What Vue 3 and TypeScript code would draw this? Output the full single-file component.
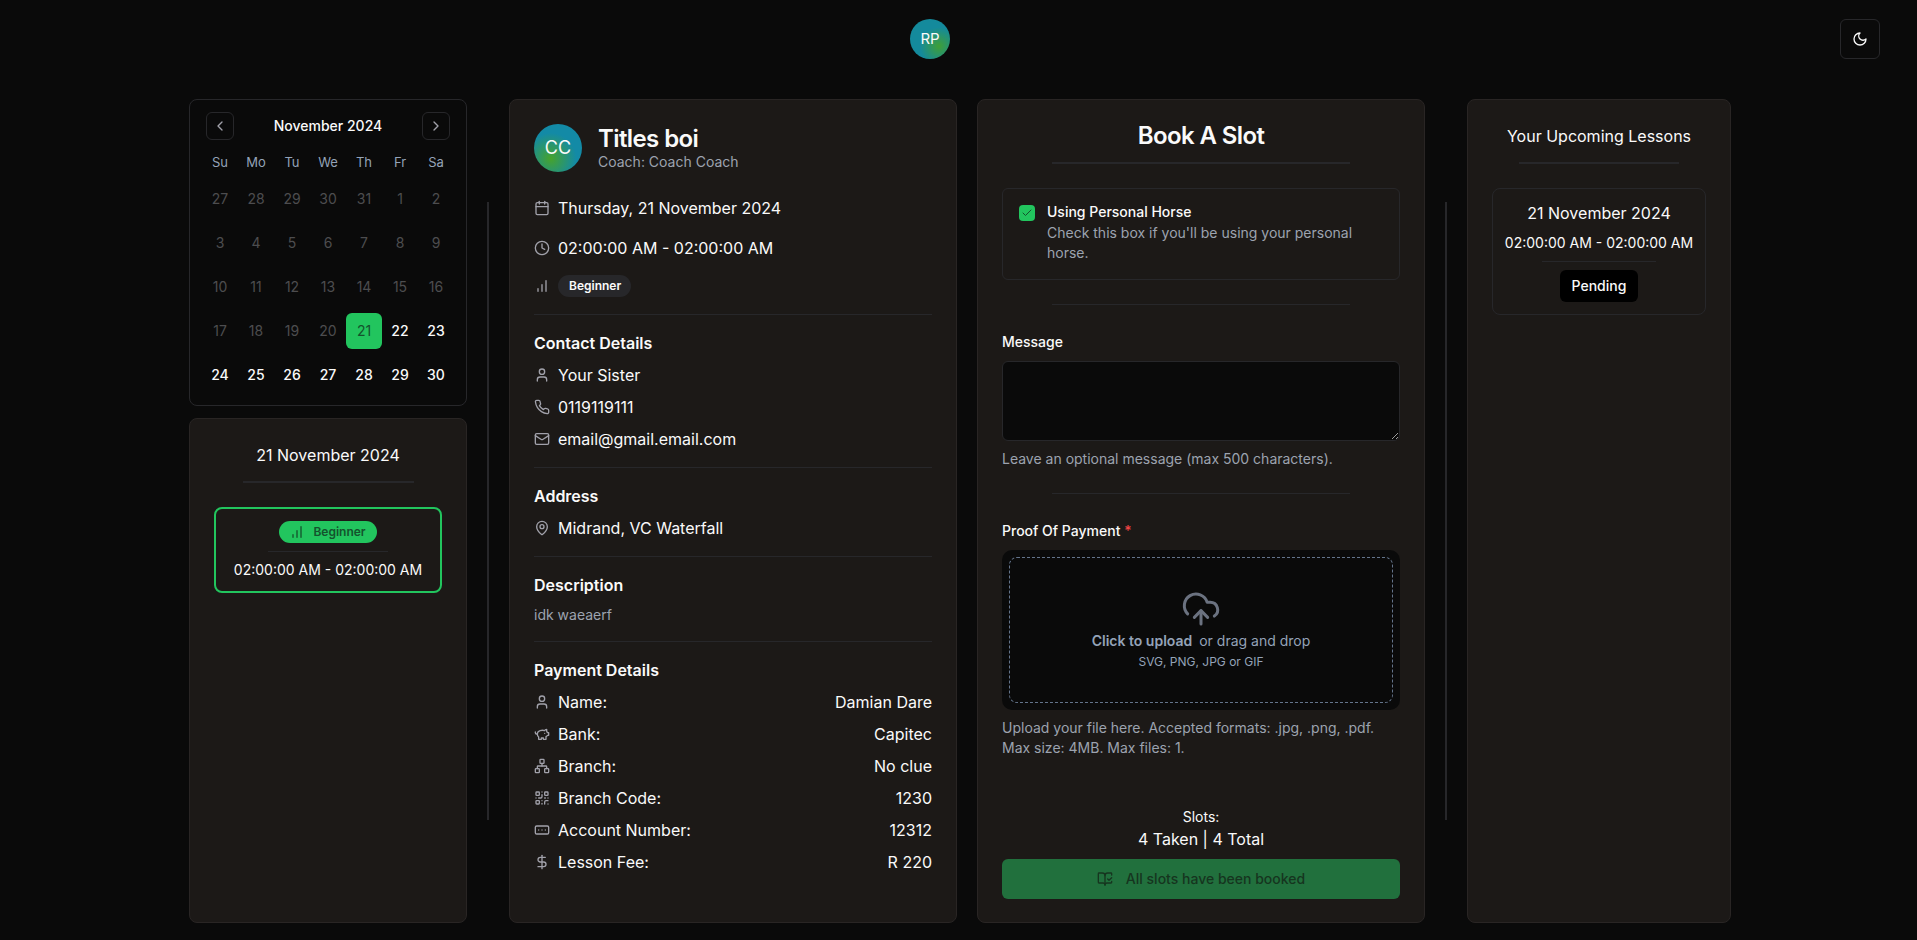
<script setup lang="ts">
interface InfoRow {
  icon: string
  label: string
  value?: string
}

const icons: Record<string, string> = {
  calendar: '<path d="M8 2v4"/><path d="M16 2v4"/><rect width="18" height="18" x="3" y="4" rx="2"/><path d="M3 10h18"/>',
  clock: '<circle cx="12" cy="12" r="10"/><polyline points="12 6 12 12 16 14"/>',
  level: '<path d="M12 20V10"/><path d="M18 20V4"/><path d="M6 20v-4"/>',
  user: '<path d="M19 21v-2a4 4 0 0 0-4-4H9a4 4 0 0 0-4 4v2"/><circle cx="12" cy="7" r="4"/>',
  phone: '<path d="M22 16.92v3a2 2 0 0 1-2.18 2 19.79 19.79 0 0 1-8.63-3.07 19.5 19.5 0 0 1-6-6 19.79 19.79 0 0 1-3.07-8.67A2 2 0 0 1 4.11 2h3a2 2 0 0 1 2 1.72 12.84 12.84 0 0 0 .7 2.81 2 2 0 0 1-.45 2.11L8.09 9.91a16 16 0 0 0 6 6l1.27-1.27a2 2 0 0 1 2.11-.45 12.84 12.84 0 0 0 2.81.7A2 2 0 0 1 22 16.92z"/>',
  mail: '<rect width="20" height="16" x="2" y="4" rx="2"/><path d="m22 7-8.97 5.7a1.94 1.94 0 0 1-2.06 0L2 7"/>',
  pin: '<path d="M20 10c0 4.993-5.539 10.193-7.399 11.799a1 1 0 0 1-1.202 0C9.539 20.193 4 14.993 4 10a8 8 0 0 1 16 0"/><circle cx="12" cy="10" r="3"/>',
  piggy: '<path d="M19 5c-1.5 0-2.8 1.4-3 2-3.5-1.5-11-.3-11 5 0 1.8 0 3 2 4.5V20h4v-2h3v2h4v-4c1-.5 1.7-1 2-2h2v-4h-2c0-1-.5-1.5-1-2V5z"/><path d="M2 9v1c0 1.1.9 2 2 2h1"/><path d="M16 11h.01"/>',
  network: '<rect x="16" y="16" width="6" height="6" rx="1"/><rect x="2" y="16" width="6" height="6" rx="1"/><rect x="9" y="2" width="6" height="6" rx="1"/><path d="M5 16v-3a1 1 0 0 1 1-1h12a1 1 0 0 1 1 1v3"/><path d="M12 12V8"/>',
  qr: '<rect width="5" height="5" x="3" y="3" rx="1"/><rect width="5" height="5" x="16" y="3" rx="1"/><rect width="5" height="5" x="3" y="16" rx="1"/><path d="M21 16h-3a2 2 0 0 0-2 2v3"/><path d="M21 21v.01"/><path d="M12 7v3a2 2 0 0 1-2 2H7"/><path d="M3 12h.01"/><path d="M12 3h.01"/><path d="M12 16v.01"/><path d="M16 12h1"/><path d="M21 12v.01"/><path d="M12 21v-1"/>',
  account: '<rect width="20" height="12" x="2" y="6" rx="2"/><path d="M12 12h.01"/><path d="M17 12h.01"/><path d="M7 12h.01"/>',
  dollar: '<line x1="12" x2="12" y1="2" y2="22"/><path d="M17 5H9.5a3.5 3.5 0 0 0 0 7h5a3.5 3.5 0 0 1 0 7H6"/>',
  book: '<path d="M12 21V7"/><path d="m16 12 2 2 4-4"/><path d="M22 6V4a1 1 0 0 0-1-1h-5a4 4 0 0 0-4 4 4 4 0 0 0-4-4H3a1 1 0 0 0-1 1v13a1 1 0 0 0 1 1h6a3 3 0 0 1 3 3 3 3 0 0 1 3-3h6a1 1 0 0 0 1-1v-1.3"/>',
  moon: '<path d="M12 3a6 6 0 0 0 9 9 9 9 0 1 1-9-9Z"/>',
  left: '<path d="m15 18-6-6 6-6"/>',
  right: '<path d="m9 18 6-6-6-6"/>',
  check: '<path d="M20 6 9 17l-5-5"/>',
  upload: '<path d="M12 13v8"/><path d="M4 14.899A7 7 0 1 1 15.71 8h1.79a4.5 4.5 0 0 1 2.5 8.242"/><path d="m8 17 4-4 4 4"/>',
}

const weekdays = ['Su', 'Mo', 'Tu', 'We', 'Th', 'Fr', 'Sa']

const days = [
  27, 28, 29, 30, 31, 1, 2,
  3, 4, 5, 6, 7, 8, 9,
  10, 11, 12, 13, 14, 15, 16,
  17, 18, 19, 20, 21, 22, 23,
  24, 25, 26, 27, 28, 29, 30,
].map((day, i) => ({
  day,
  selected: i === 25,
  disabled: i < 25,
}))

const contact: InfoRow[] = [
  { icon: 'user', label: 'Your Sister' },
  { icon: 'phone', label: '0119119111' },
  { icon: 'mail', label: 'email@gmail.email.com' },
]

const payment: InfoRow[] = [
  { icon: 'user', label: 'Name:', value: 'Damian Dare' },
  { icon: 'piggy', label: 'Bank:', value: 'Capitec' },
  { icon: 'network', label: 'Branch:', value: 'No clue' },
  { icon: 'qr', label: 'Branch Code:', value: '1230' },
  { icon: 'account', label: 'Account Number:', value: '12312' },
  { icon: 'dollar', label: 'Lesson Fee:', value: 'R 220' },
]
</script>

<template>
  <div class="page">
    <header class="topbar">
      <div class="avatar avatar-small">RP</div>
      <button class="theme-toggle" type="button">
        <svg class="icon" viewBox="0 0 24 24" v-html="icons.moon" />
      </button>
    </header>

    <main class="columns">
      <!-- Calendar + lessons of the selected day -->
      <section class="col-left">
        <div class="calendar">
          <div class="cal-head">
            <button class="cal-nav" type="button">
              <svg class="icon" viewBox="0 0 24 24" v-html="icons.left" />
            </button>
            <span>November 2024</span>
            <button class="cal-nav" type="button">
              <svg class="icon" viewBox="0 0 24 24" v-html="icons.right" />
            </button>
          </div>
          <div class="cal-weekdays">
            <span v-for="day in weekdays" :key="day">{{ day }}</span>
          </div>
          <div class="cal-grid">
            <span
              v-for="(cell, i) in days"
              :key="i"
              class="cal-day"
              :class="{ selected: cell.selected, disabled: cell.disabled }"
            >{{ cell.day }}</span>
          </div>
        </div>

        <div class="card day-card">
          <h3 class="side-title">21 November 2024</h3>
          <div class="rule rule-day" />
          <div class="lesson">
            <span class="lesson-badge">
              <svg class="icon" viewBox="0 0 24 24" v-html="icons.level" />
              Beginner
            </span>
            <div class="thin-rule rule-lesson" />
            <span class="time">02:00:00 AM - 02:00:00 AM</span>
          </div>
        </div>
      </section>

      <div class="separator" />

      <!-- Lesson details -->
      <section class="card details">
        <div class="details-head">
          <div class="avatar avatar-large">CC</div>
          <div>
            <h2>Titles boi</h2>
            <p>Coach: Coach Coach</p>
          </div>
        </div>

        <div class="meta-row meta-date">
          <svg class="icon row-icon" viewBox="0 0 24 24" v-html="icons.calendar" />
          Thursday, 21 November 2024
        </div>
        <div class="meta-row meta-time">
          <svg class="icon row-icon" viewBox="0 0 24 24" v-html="icons.clock" />
          02:00:00 AM - 02:00:00 AM
        </div>
        <div class="meta-row meta-level">
          <svg class="icon row-icon" viewBox="0 0 24 24" v-html="icons.level" />
          <span class="level-badge">Beginner</span>
        </div>

        <div class="section">
          <h4>Contact Details</h4>
          <div v-for="row in contact" :key="row.label" class="info-row">
            <svg class="icon row-icon" viewBox="0 0 24 24" v-html="icons[row.icon]" />
            {{ row.label }}
          </div>
        </div>

        <div class="section">
          <h4>Address</h4>
          <div class="info-row">
            <svg class="icon row-icon" viewBox="0 0 24 24" v-html="icons.pin" />
            Midrand, VC Waterfall
          </div>
        </div>

        <div class="section section-desc">
          <h4>Description</h4>
          <p>idk waeaerf</p>
        </div>

        <div class="section section-last">
          <h4>Payment Details</h4>
          <div v-for="row in payment" :key="row.label" class="info-row">
            <svg class="icon row-icon" viewBox="0 0 24 24" v-html="icons[row.icon]" />
            {{ row.label }}
            <span class="info-value">{{ row.value }}</span>
          </div>
        </div>
      </section>

      <!-- Booking form -->
      <section class="card booking">
        <h2 class="booking-title">Book A Slot</h2>
        <div class="rule rule-wide" />

        <div class="horse-box">
          <span class="checkbox">
            <svg class="icon" viewBox="0 0 24 24" v-html="icons.check" />
          </span>
          <div>
            <div class="field-label">Using Personal Horse</div>
            <p class="hint horse-hint">Check this box if you'll be using your personal horse.</p>
          </div>
        </div>

        <div class="thin-rule rule-wide rule-form" />

        <label class="field-label message-label">Message</label>
        <textarea class="message" />
        <p class="hint message-hint">Leave an optional message (max 500 characters).</p>

        <div class="thin-rule rule-wide rule-form2" />

        <label class="field-label proof-label">Proof Of Payment <em>*</em></label>
        <div class="upload">
          <div class="upload-inner">
            <svg class="upload-icon" viewBox="0 0 24 24" v-html="icons.upload" />
            <p class="upload-text"><strong>Click to upload</strong> or drag and drop</p>
            <p class="upload-types">SVG, PNG, JPG or GIF</p>
          </div>
        </div>
        <p class="hint upload-hint">Upload your file here. Accepted formats: .jpg, .png, .pdf. Max size: 4MB. Max files: 1.</p>

        <div class="slots">
          <span>Slots:</span>
          <strong>4 Taken | 4 Total</strong>
        </div>
        <button class="book-btn" type="button" disabled>
          <svg class="icon" viewBox="0 0 24 24" v-html="icons.book" />
          All slots have been booked
        </button>
      </section>

      <div class="separator" />

      <!-- Upcoming lessons -->
      <section class="card upcoming">
        <h3 class="side-title">Your Upcoming Lessons</h3>
        <div class="rule rule-upcoming" />
        <div class="upcoming-item">
          <span class="upcoming-date">21 November 2024</span>
          <span class="time">02:00:00 AM - 02:00:00 AM</span>
          <div class="thin-rule rule-item" />
          <span class="pending">Pending</span>
        </div>
      </section>
    </main>
  </div>
</template>

<style>
html,
body {
  margin: 0;
  background: #0a0a0a;
}
</style>

<style scoped>
.page {
  height: 940px;
  overflow: hidden;
  background: #0a0a0a;
  color: #fafafa;
  font-family: Inter, "Liberation Sans", sans-serif;
  font-size: 14px;
  line-height: 20px;
  box-sizing: border-box;
}

h2,
h3,
h4,
p {
  margin: 0;
  font-weight: inherit;
}

.icon {
  width: 16px;
  height: 16px;
  flex: none;
  fill: none;
  stroke: currentColor;
  stroke-width: 2;
  stroke-linecap: round;
  stroke-linejoin: round;
}

.topbar {
  display: flex;
  align-items: center;
  height: 40px;
  padding: 19px 37px 40px 910px;
}

.avatar {
  display: flex;
  align-items: center;
  justify-content: center;
  border-radius: 50%;
  flex: none;
}

.avatar-small {
  width: 40px;
  height: 40px;
  font-size: 15px;
  background:
    radial-gradient(circle at 72% 68%, #3f9f36 0, rgba(63, 159, 54, 0) 48%),
    #148a9c;
}

.avatar-large {
  width: 48px;
  height: 48px;
  font-size: 18px;
  background:
    radial-gradient(circle at 35% 72%, #46a32c 0, rgba(70, 163, 44, 0) 55%),
    #138aa6;
}

.theme-toggle {
  display: flex;
  align-items: center;
  justify-content: center;
  width: 40px;
  height: 40px;
  margin-left: auto;
  padding: 0;
  color: #fafafa;
  background: transparent;
  border: 1px solid #27272a;
  border-radius: 6px;
}

.columns {
  display: flex;
  gap: 20px;
  height: 824px;
  padding-left: 189px;
}

.separator {
  flex: none;
  align-self: center;
  width: 2px;
  height: 75%;
  background: #27272a;
}

.card {
  box-sizing: border-box;
  background: #1c1917;
  border: 1px solid #292524;
  border-radius: 8px;
}

.col-left {
  display: flex;
  flex-direction: column;
  gap: 12px;
  flex: none;
  width: 278px;
}

.calendar {
  box-sizing: border-box;
  height: 307px;
  padding: 12px;
  border: 1px solid #27272a;
  border-radius: 8px;
}

.cal-head {
  display: flex;
  align-items: center;
  justify-content: space-between;
  height: 28px;
  margin: 0 4px;
  font-weight: 500;
  font-size: 14px;
}

.cal-nav {
  display: flex;
  align-items: center;
  justify-content: center;
  box-sizing: border-box;
  width: 28px;
  height: 28px;
  padding: 0;
  color: #a1a1aa;
  background: transparent;
  border: 1px solid #27272a;
  border-radius: 6px;
}

.cal-weekdays {
  display: grid;
  grid-template-columns: repeat(7, 36px);
  margin-top: 12px;
  color: #94a3b8;
  font-size: 13px;
  text-align: center;
}

.cal-grid {
  display: grid;
  grid-template-columns: repeat(7, 36px);
  grid-auto-rows: 36px;
  row-gap: 8px;
  margin-top: 9px;
}

.cal-day {
  display: flex;
  align-items: center;
  justify-content: center;
  border-radius: 6px;
  font-weight: 500;
}

.cal-day.disabled {
  color: #4d4d4f;
  font-weight: 400;
}

.cal-day.selected {
  color: #14532d;
  background: #22c55e;
  font-weight: 400;
}

.day-card {
  flex: 1;
  padding: 24px;
}

.side-title {
  font-size: 16px;
  font-weight: 400;
  line-height: 24px;
  text-align: center;
}

.rule {
  height: 2px;
  margin: 0 auto;
  background: #27272a;
}

.thin-rule {
  height: 1px;
  margin: 0 auto;
  background: #27272a;
}

.rule-day {
  width: 171px;
  margin-top: 14px;
}

.lesson {
  box-sizing: border-box;
  display: flex;
  flex-direction: column;
  align-items: center;
  height: 86px;
  margin-top: 24px;
  padding-top: 12px;
  border: 2px solid #22c55e;
  border-radius: 8px;
}

.lesson-badge {
  display: flex;
  align-items: center;
  gap: 8px;
  height: 22px;
  padding: 0 11px 0 10px;
  color: #14532d;
  background: #22c55e;
  border-radius: 999px;
  font-size: 12px;
  font-weight: 600;
}

.rule-lesson {
  width: 120px;
  margin: 8px 0 8px;
}

.time {
  font-size: 14px;
}

.details {
  flex: none;
  width: 448px;
  padding: 24px 24px 0;
}

.details-head {
  display: flex;
  align-items: center;
  gap: 16px;
}

.details-head h2 {
  font-size: 24px;
  font-weight: 600;
  letter-spacing: -0.6px;
  line-height: 28px;
}

.details-head p {
  margin-top: -1px;
  color: #9ca3af;
}

.meta-row {
  display: flex;
  align-items: center;
  font-size: 16px;
  line-height: 24px;
}

.meta-date {
  margin-top: 24px;
}

.meta-time {
  margin-top: 16px;
}

.meta-level {
  margin-top: 15px;
  padding-bottom: 17px;
}

.row-icon {
  margin-right: 8px;
  color: #a1a1aa;
}

.level-badge {
  display: block;
  padding: 0 10px 0 11px;
  background: #27272a;
  border-radius: 999px;
  font-size: 12px;
  font-weight: 600;
  line-height: 22px;
}

.section {
  padding: 16px 0 12px;
  border-top: 1px solid #27272a;
}

.section h4 {
  margin-bottom: 4px;
  font-size: 16px;
  font-weight: 600;
  line-height: 24px;
}

.section-desc {
  padding-bottom: 16px;
}

.section-desc h4 {
  margin-bottom: 8px;
}

.section-desc p {
  color: #9ca3af;
}

.section-last {
  padding-bottom: 0;
}

.info-row {
  display: flex;
  align-items: center;
  height: 32px;
  font-size: 16px;
}

.info-value {
  margin-left: auto;
}

.booking {
  display: flex;
  flex-direction: column;
  flex: none;
  width: 448px;
  padding: 0 24px;
}

.booking-title {
  margin: 20px 0 10px;
  font-size: 24px;
  font-weight: 600;
  letter-spacing: -0.6px;
  line-height: 32px;
  text-align: center;
}

.rule-wide {
  width: 298px;
  flex: none;
}

.horse-box {
  box-sizing: border-box;
  display: flex;
  flex: none;
  gap: 12px;
  height: 92px;
  margin-top: 24px;
  padding: 13px 16px;
  border: 1px solid #27272a;
  border-radius: 6px;
}

.checkbox {
  display: flex;
  align-items: center;
  justify-content: center;
  flex: none;
  width: 16px;
  height: 16px;
  margin-top: 3px;
  color: #14532d;
  background: #22c55e;
  border-radius: 4px;
}

.checkbox .icon {
  width: 12px;
  height: 12px;
}

.field-label {
  display: block;
  font-weight: 500;
}

.hint {
  color: #9ca3af;
}

.horse-hint {
  margin-top: 1px;
}

.rule-form {
  margin-top: 24px;
}

.message-label {
  margin-top: 27px;
}

.message {
  box-sizing: border-box;
  display: block;
  flex: none;
  width: 100%;
  height: 80px;
  margin-top: 9px;
  background: #0a0a0a;
  border: 1px solid #27272a;
  border-radius: 6px;
  resize: vertical;
}

.message-hint {
  margin-top: 8px;
}

.rule-form2 {
  margin-top: 24px;
}

.proof-label {
  margin-top: 27px;
}

.proof-label em {
  color: #ef4444;
  font-style: normal;
}

.upload {
  box-sizing: border-box;
  flex: none;
  height: 160px;
  margin-top: 9px;
  padding: 7px;
  background: #0a0a0a;
  border-radius: 10px;
}

.upload-inner {
  box-sizing: border-box;
  display: flex;
  flex-direction: column;
  align-items: center;
  height: 146px;
  padding-top: 31px;
  border: 1px dashed #64748b;
  border-radius: 8px;
}

.upload-icon {
  width: 40px;
  height: 40px;
  fill: none;
  stroke: #6b7280;
  stroke-width: 1.8;
  stroke-linecap: round;
  stroke-linejoin: round;
}

.upload-text {
  margin-top: 2px;
  color: #94a3b8;
  white-space: pre-wrap;
}

.upload-text strong {
  margin-right: 3px;
  font-weight: 600;
}

.upload-types {
  margin-top: 3px;
  color: #94a3b8;
  font-size: 12px;
  line-height: 16px;
}

.upload-hint {
  margin-top: 8px;
}

.slots {
  display: flex;
  flex-direction: column;
  align-items: center;
  margin-top: auto;
}

.slots strong {
  font-size: 16px;
  font-weight: 400;
  line-height: 24px;
}

.book-btn {
  display: flex;
  align-items: center;
  justify-content: center;
  gap: 13px;
  flex: none;
  height: 40px;
  margin: 8px 0 23px;
  padding: 0;
  color: #16351f;
  background: #21703d;
  border: 0;
  border-radius: 6px;
  font: inherit;
  font-weight: 500;
}

.upcoming {
  flex: none;
  width: 264px;
  padding: 24px;
}

.rule-upcoming {
  width: 160px;
  margin-top: 14px;
}

.upcoming-item {
  box-sizing: border-box;
  display: flex;
  flex-direction: column;
  align-items: center;
  height: 127px;
  margin-top: 24px;
  padding-top: 12px;
  border: 1px solid #27272a;
  border-radius: 8px;
}

.upcoming-date {
  font-size: 16px;
  line-height: 24px;
}

.upcoming-item .time {
  margin-top: 8px;
}

.rule-item {
  width: 114px;
  margin: 8px 0;
}

.pending {
  padding: 6px 12px;
  background: #000;
  border-radius: 6px;
  font-weight: 500;
}
</style>
